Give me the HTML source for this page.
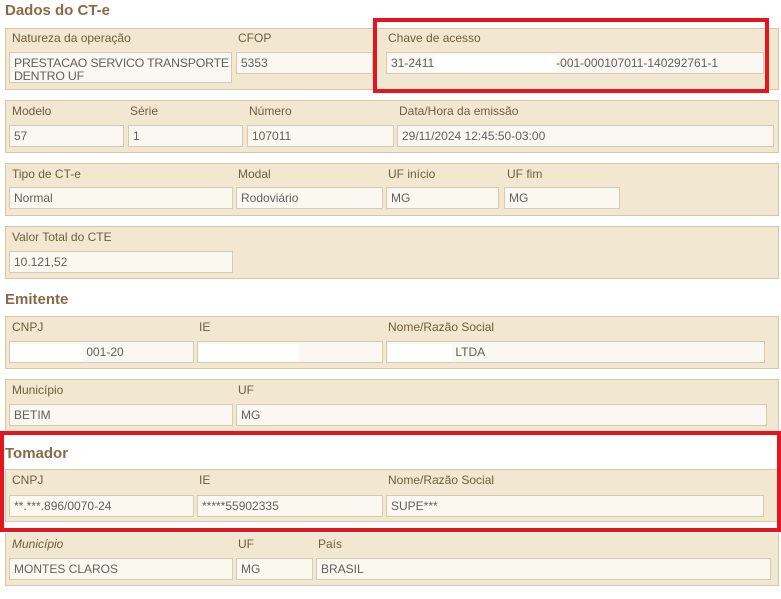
<!DOCTYPE html>
<html><head><meta charset="utf-8"><style>
body{margin:0;width:781px;height:599px;background:#fff;position:relative;overflow:hidden;font-family:"Liberation Sans",Arial,sans-serif}
.h{position:absolute;left:5px;font-size:15px;font-weight:bold;color:#8a6a45}
.p{position:absolute;left:5px;width:774px;background:#f2e8d2;border:1px solid #d8c7a2;box-sizing:border-box}
.l{position:absolute;font-size:12px;color:#6e5d3e}
.i{position:absolute;height:22px;background:#faf8f1;border:1px solid #d6cbb0;box-sizing:border-box;font-size:12px;color:#606060;padding:4px 0 0 4px;line-height:13px;white-space:nowrap}
.s{display:inline-block;background:#fff;height:17px;vertical-align:top;margin-top:-2px}
.r{position:absolute;border:4px solid #e3151f;box-sizing:border-box}
</style></head><body>
<div class="h" style="top:2px">Dados do CT-e</div>
<div class="p" style="top:28px;height:62px"></div>
<div class="l" style="left:12px;top:31px">Natureza da operação</div>
<div class="l" style="left:238px;top:31px">CFOP</div>
<div class="l" style="left:388px;top:31px">Chave de acesso</div>
<div class="i" style="left:9px;top:52px;width:223px;height:31px;font-size:12.3px;letter-spacing:-0.2px">PRESTACAO SERVICO TRANSPORTE<br>DENTRO UF</div>
<div class="i" style="left:236px;top:52px;width:137px">5353</div>
<div class="i" style="left:386px;top:52px;width:378px">31-2411<span class="s" style="width:122px"></span>-001-000107011-140292761-1</div>
<div class="r" style="left:373px;top:18px;width:396px;height:75px"></div>

<div class="p" style="top:100px;height:53px"></div>
<div class="l" style="left:12px;top:104px">Modelo</div>
<div class="l" style="left:130px;top:104px">Série</div>
<div class="l" style="left:249px;top:104px">Número</div>
<div class="l" style="left:399px;top:104px">Data/Hora da emissão</div>
<div class="i" style="left:9px;top:125px;width:115px">57</div>
<div class="i" style="left:128px;top:125px;width:115px">1</div>
<div class="i" style="left:247px;top:125px;width:147px">107011</div>
<div class="i" style="left:397px;top:125px;width:377px">29/11/2024 12:45:50-03:00</div>

<div class="p" style="top:163px;height:53px"></div>
<div class="l" style="left:12px;top:167px">Tipo de CT-e</div>
<div class="l" style="left:238px;top:167px">Modal</div>
<div class="l" style="left:388px;top:167px">UF início</div>
<div class="l" style="left:507px;top:167px">UF fim</div>
<div class="i" style="left:9px;top:187px;width:224px">Normal</div>
<div class="i" style="left:236px;top:187px;width:147px">Rodoviário</div>
<div class="i" style="left:386px;top:187px;width:113px">MG</div>
<div class="i" style="left:504px;top:187px;width:116px">MG</div>

<div class="p" style="top:226px;height:53px"></div>
<div class="l" style="left:12px;top:230px">Valor Total do CTE</div>
<div class="i" style="left:9px;top:251px;width:224px">10.121,52</div>

<div class="h" style="top:291px">Emitente</div>
<div class="p" style="top:316px;height:53px"></div>
<div class="l" style="left:12px;top:320px">CNPJ</div>
<div class="l" style="left:199px;top:320px">IE</div>
<div class="l" style="left:388px;top:320px">Nome/Razão Social</div>
<div class="i" style="left:9px;top:341px;width:185px;padding-left:1px"><span class="s" style="width:72px"></span>&nbsp;001-20</div>
<div class="i" style="left:197px;top:341px;width:186px;padding-left:1px"><span class="s" style="width:99px"></span></div>
<div class="i" style="left:386px;top:341px;width:379px;padding-left:1px"><span class="s" style="width:64px"></span>&nbsp;LTDA</div>

<div class="p" style="top:379px;height:53px"></div>
<div class="l" style="left:12px;top:383px">Município</div>
<div class="l" style="left:238px;top:383px">UF</div>
<div class="i" style="left:9px;top:404px;width:224px">BETIM</div>
<div class="i" style="left:236px;top:404px;width:531px">MG</div>

<div class="h" style="top:445px">Tomador</div>
<div class="p" style="top:469px;height:53px"></div>
<div class="l" style="left:12px;top:473px">CNPJ</div>
<div class="l" style="left:199px;top:473px">IE</div>
<div class="l" style="left:388px;top:473px">Nome/Razão Social</div>
<div class="i" style="left:9px;top:495px;width:185px">**.***.896/0070-24</div>
<div class="i" style="left:197px;top:495px;width:186px">*****55902335</div>
<div class="i" style="left:386px;top:495px;width:378px">SUPE***</div>
<div class="r" style="left:0;top:431px;width:781px;height:101px"></div>

<div class="p" style="top:533px;height:53px;border-top:none"></div>
<div class="l" style="left:12px;top:537px;font-style:italic">Município</div>
<div class="l" style="left:238px;top:537px">UF</div>
<div class="l" style="left:318px;top:537px">País</div>
<div class="i" style="left:9px;top:558px;width:224px">MONTES CLAROS</div>
<div class="i" style="left:236px;top:558px;width:77px">MG</div>
<div class="i" style="left:316px;top:558px;width:455px">BRASIL</div>
</body></html>
